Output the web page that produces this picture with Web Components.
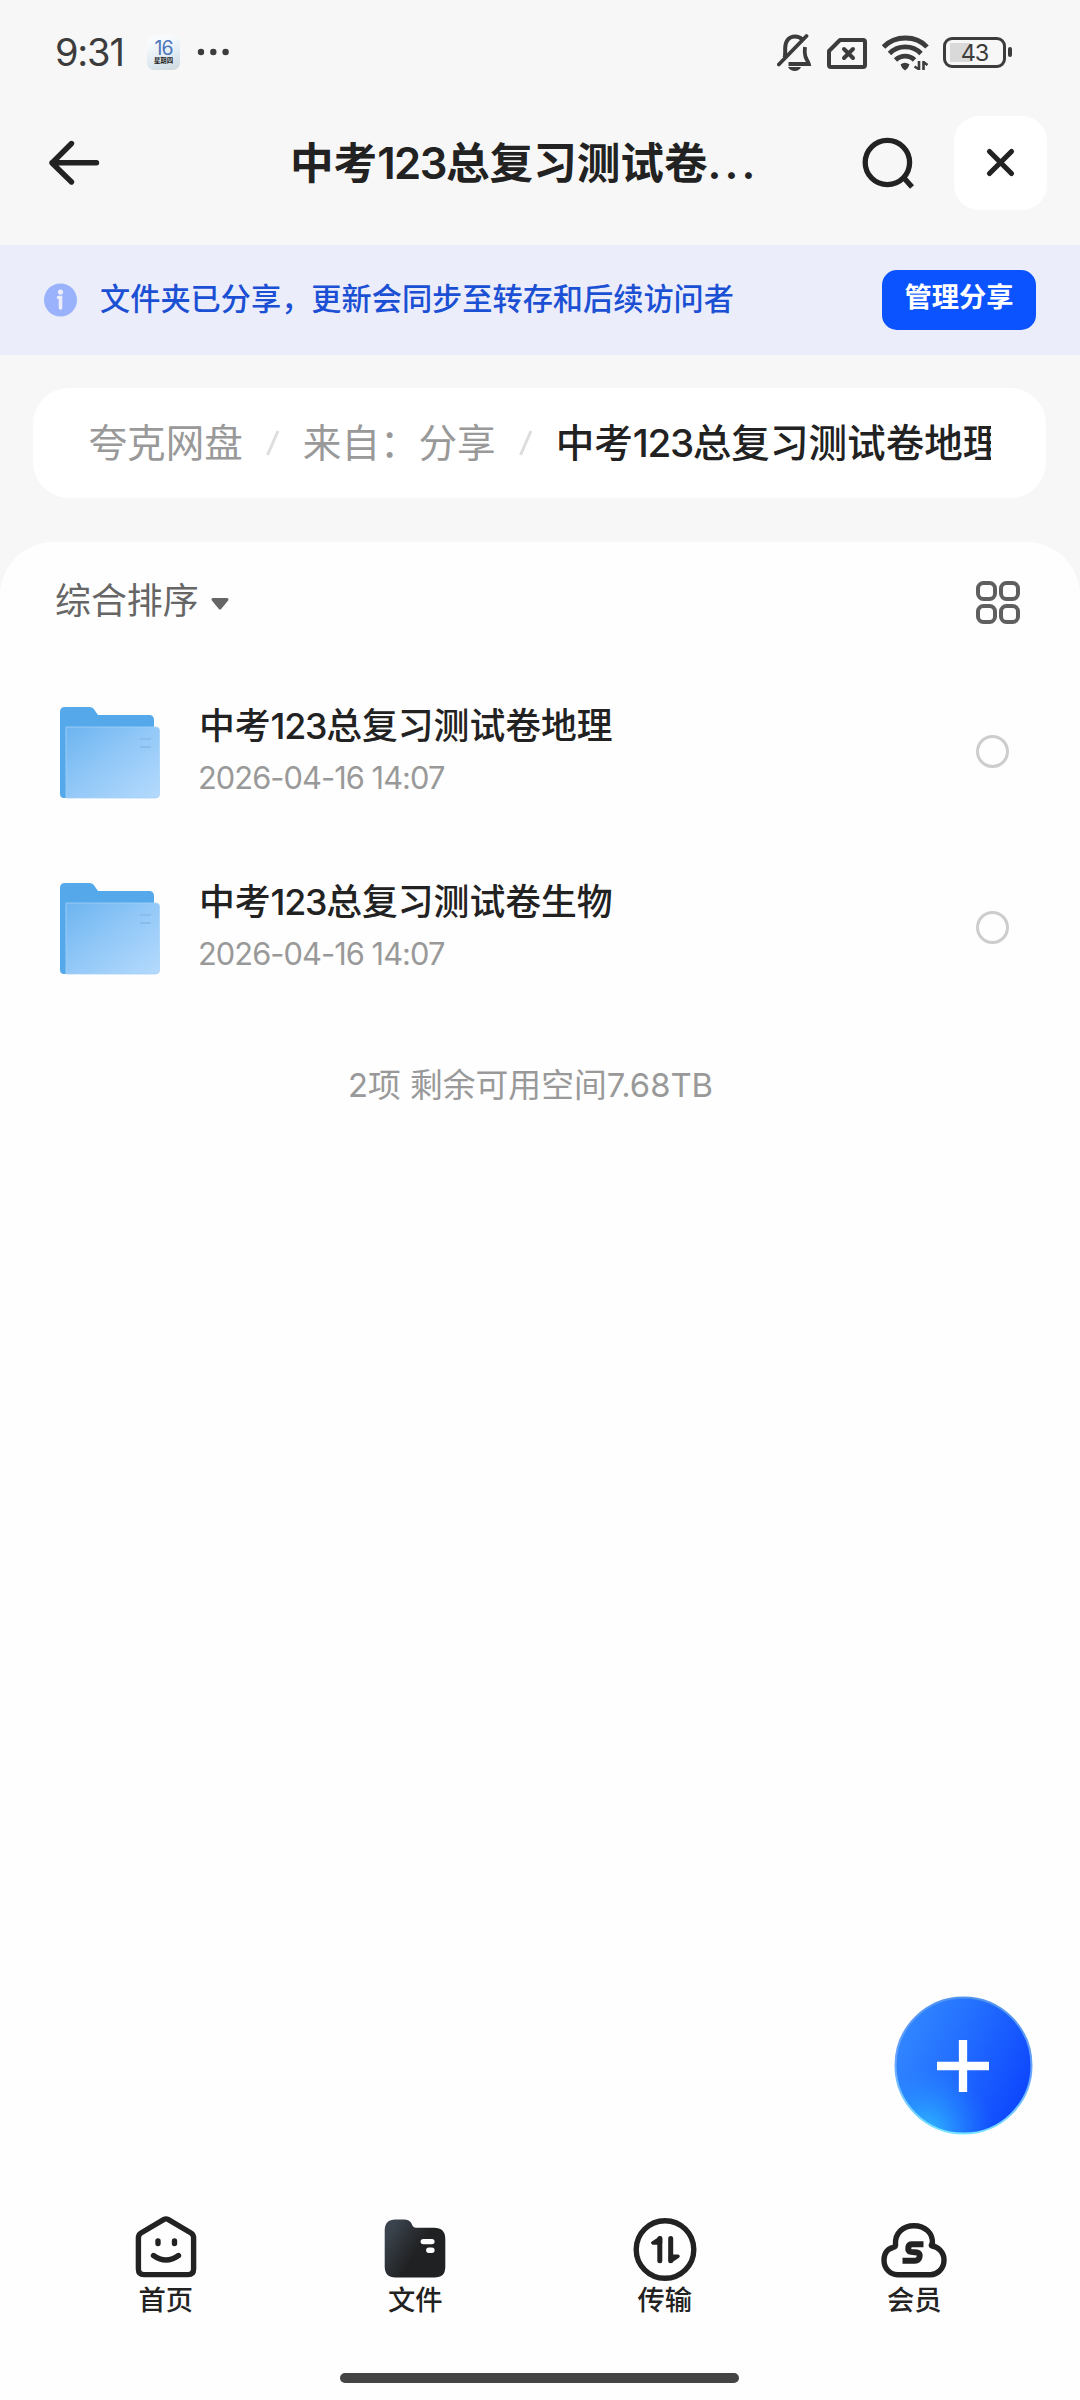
<!DOCTYPE html>
<html lang="zh-CN">
<head>
<meta charset="utf-8">
<title>网盘</title>
<style>
  body {
    margin: 0;
    background: #f7f7f7;
    color: #222;
    font-family: Inter, "Noto Sans CJK SC", sans-serif;
  }
  .num { letter-spacing: -0.035em; }
  .more { letter-spacing: 0.07em; }
</style>
</head>
<body>
<drive-page>
  <status-bar time="9:31" battery="43"></status-bar>
  <title-bar>中考<span class="num">123</span>总复习测试卷<span class="more">...</span></title-bar>
  <share-banner action="管理分享">文件夹已分享，更新会同步至转存和后续访问者</share-banner>
  <path-bar>
    <path-item>夸克网盘</path-item>
    <path-item>来自：分享</path-item>
    <path-item current>中考<span class="num">123</span>总复习测试卷地理</path-item>
  </path-bar>
  <file-sheet sort="综合排序">
    <file-row date="2026-04-16 14:07">中考<span class="num">123</span>总复习测试卷地理</file-row>
    <file-row date="2026-04-16 14:07">中考<span class="num">123</span>总复习测试卷生物</file-row>
    <span slot="summary">2项 剩余可用空间7.68TB</span>
  </file-sheet>
  <add-button slot="float"></add-button>
  <tab-bar slot="bottom">
    <tab-item icon="home">首页</tab-item>
    <tab-item icon="folder">文件</tab-item>
    <tab-item icon="transfer">传输</tab-item>
    <tab-item icon="member">会员</tab-item>
  </tab-bar>
</drive-page>

<script>
class BaseElement extends HTMLElement {
  connectedCallback() {
    if (this.shadowRoot) {
      return;
    }
    this.attachShadow({ mode: "open" }).innerHTML = this.render();
  }
}

class DrivePage extends BaseElement {
  render() {
    return `
    <style>
        :host {
            display: flex;
            flex-direction: column;
            position: relative;
            width: 1080px;
            height: 2400px;
            overflow: hidden;
        }
        .bottom {
            background: #fefefe;
        }
        .float {
            position: absolute;
            right: 47px;
            bottom: 265px;
        }
    </style>
    <slot></slot>
    <div class="bottom"><slot name="bottom"></slot></div>
    <div class="float"><slot name="float"></slot></div>`;
  }
}

class StatusBar extends BaseElement {
  render() {
    return `
    <style>
        :host {
            display: flex;
            align-items: center;
            box-sizing: border-box;
            height: 104px;
            padding: 0 68px 0 55px;
            color: #3c3c3c;
        }
        svg { display: block; }
        .time {
            width: 92px;
            font-size: 38px;
            line-height: 40px;
            letter-spacing: -1.2px;
        }
        .calendar {
            display: flex;
            flex-direction: column;
            align-items: center;
            box-sizing: border-box;
            width: 33px;
            height: 35px;
            padding-top: 5px;
            border-radius: 7px;
            background: linear-gradient(160deg, #f8fbfd 20%, #dde9f1 65%, #ccd8da);
        }
        .day {
            color: #4c76bd;
            font-size: 19.5px;
            line-height: 17px;
            letter-spacing: -1px;
        }
        .week {
            color: #222;
            font-size: 6.4px;
            line-height: 8px;
            font-weight: 700;
        }
        .dots { margin-left: 17px; }
        .icons {
            display: flex;
            align-items: center;
            margin-left: auto;
        }
        .battery {
            display: flex;
            align-items: center;
            gap: 2px;
        }
        .cell {
            box-sizing: border-box;
            width: 63px;
            height: 31px;
            border: 3px solid #3c3c3c;
            border-radius: 9px;
            font-size: 23.5px;
            line-height: 26px;
            text-align: center;
            letter-spacing: -1.2px;
            background: linear-gradient(#d9d9d9, #d9d9d9) 4px 3px / 20px 19px no-repeat;
        }
        .nub {
            width: 4px;
            height: 10px;
            border-radius: 2px;
            background: #3c3c3c;
        }
    </style>
    <div class="time">${this.getAttribute("time")}</div>
    <div class="calendar"><span class="day">16</span><span class="week">星期四</span></div>
    <svg class="dots" width="32" height="8" fill="#3c3c3c"><circle cx="4" cy="4" r="3.2"/><circle cx="16.3" cy="4" r="3.2"/><circle cx="28.6" cy="4" r="3.2"/></svg>
    <div class="icons">
        <svg width="50" height="44" viewBox="0 0 50 44" fill="none" stroke="#3c3c3c" stroke-width="4">
            <path d="M7.500 27.500C8.600 25 8.100 21.500 8.200 18C8.400 10.500 12.500 6.500 18 6.500C21 6.500 23.500 7.500 25.200 9.500"/>
            <path d="M28 17C27.600 20 27.600 23.500 28.300 26C29 29 31 31 31.800 34H11.500" stroke-width="3.800"/>
            <path d="M1.800 34.500L29.500 6" stroke-linecap="round" stroke-width="3.800"/>
            <path d="M11 37H24C22 42.400 13.500 42.400 11 37Z" fill="#3c3c3c" stroke="none"/>
        </svg>
        <svg width="55" height="44" viewBox="0 0 55 44" fill="none" stroke="#3c3c3c" stroke-width="4">
            <path d="M13 10H36Q38 10 38 12V35Q38 37 36 37H4Q2 37 2 35V21Z" stroke-linejoin="round"/>
            <path d="M17 19L26 28M26 19L17 28" stroke-linecap="round"/>
        </svg>
        <svg width="61" height="44" viewBox="0 0 61 44" fill="none" stroke="#3c3c3c" stroke-width="4.800">
            <path d="M1.500 17C13 5 34 5 45 17"/>
            <path d="M7.500 23.500C16 14.700 30.500 14.700 39 23.500"/>
            <path d="M13.500 30C19 24.800 27.500 24.800 32.500 30"/>
            <path d="M18.500 34.500Q23 31 27.500 34.500Q26.500 38.500 23 40.500Q19.500 38.500 18.500 34.500Z" fill="#3c3c3c" stroke="none"/>
            <path d="M37 31V40M36.500 39L32.500 36.500M41.500 40V31M42 32.500L45.500 35" stroke-width="2.600"/>
        </svg>
        <div class="battery"><div class="cell">${this.getAttribute("battery")}</div><div class="nub"></div></div>
    </div>`;
  }
}

class TitleBar extends BaseElement {
  render() {
    return `
    <style>
        :host {
            display: flex;
            align-items: center;
            box-sizing: border-box;
            height: 141px;
            padding: 0 33px 23px 47px;
        }
        svg { display: block; }
        .title {
            flex: 1;
            padding: 2px 0 0 187px;
            font-size: 43.6px;
            line-height: 60px;
            font-weight: 600;
            white-space: nowrap;
        }
        .search { margin-right: 36px; }
        .close {
            display: grid;
            place-items: center;
            width: 93px;
            height: 94px;
            border-radius: 25px;
            background: #fff;
        }
    </style>
    <svg width="56" height="48" viewBox="0 0 56 48" fill="none" stroke="#222" stroke-width="5.400" stroke-linecap="round" stroke-linejoin="round"><path d="M24.500 4.500L5 24L24.500 43M5 23.800H49.500"/></svg>
    <div class="title"><slot></slot></div>
    <svg class="search" width="56" height="56" viewBox="0 0 56 56" fill="none" stroke="#222" stroke-width="5.300"><circle cx="25.400" cy="27.500" r="22.200"/><path d="M42 43L50 52"/></svg>
    <div class="close"><svg width="34" height="34" viewBox="0 0 34 34" stroke="#222" stroke-width="5.200" stroke-linecap="round"><path d="M5.500 5.500L27.500 27.500M27.500 5.500L5.500 27.500"/></svg></div>`;
  }
}

class ShareBanner extends BaseElement {
  render() {
    return `
    <style>
        :host {
            display: flex;
            align-items: center;
            box-sizing: border-box;
            height: 110px;
            padding: 0 44px;
            background: #ebedfa;
        }
        .text {
            flex: 1;
            padding: 0 0 3px 22px;
            color: #1c50d4;
            font-size: 30.2px;
            line-height: 40px;
            font-weight: 500;
            white-space: nowrap;
        }
        button {
            width: 154px;
            height: 60px;
            padding: 0 0 4px;
            border: none;
            border-radius: 15px;
            background: #0b53ff;
            color: #fff;
            font: inherit;
            font-size: 27.3px;
            line-height: 40px;
            font-weight: 600;
        }
    </style>
    <svg width="34" height="34" viewBox="0 0 34 34"><circle cx="16.500" cy="17" r="16.500" fill="#9ab2fb"/><circle cx="16.500" cy="9" r="2.600" fill="#ebedfa"/><path d="M14.500 14.500H16.500V25" fill="none" stroke="#ebedfa" stroke-width="3.600" stroke-linecap="round"/></svg>
    <div class="text"><slot></slot></div>
    <button>${this.getAttribute("action")}</button>`;
  }
}

class PathBar extends BaseElement {
  render() {
    return `
    <style>
        :host {
            display: flex;
            align-items: center;
            box-sizing: border-box;
            height: 110px;
            margin: 33px 34px 44px 33px;
            padding: 0 55.5px;
            border-radius: 36px;
            background: #fff;
        }
        .clip {
            display: flex;
            width: 904px;
            overflow: hidden;
        }
    </style>
    <div class="clip"><slot></slot></div>`;
  }
}

class PathItem extends BaseElement {
  render() {
    const slash = this.hasAttribute("current") ? "" : `<svg width="60" height="26" viewBox="0 0 60 26"><path d="M24.500 25L35 1" stroke="#ddd" stroke-width="3"/></svg>`;
    return `
    <style>
        :host {
            display: flex;
            flex: none;
            align-items: center;
            color: #999;
            font-size: 38.6px;
            line-height: 56px;
            white-space: nowrap;
        }
        :host([current]) {
            color: #222;
            font-weight: 500;
        }
    </style>
    <span><slot></slot></span>${slash}`;
  }
}

class FileSheet extends BaseElement {
  render() {
    return `
    <style>
        :host {
            display: flex;
            flex: 1;
            flex-direction: column;
            border-radius: 54px 54px 0 0;
            background: #fefefe;
        }
        .tools {
            display: flex;
            align-items: center;
            height: 121px;
            padding: 0 60px 0 55px;
            color: #666;
            font-size: 35.9px;
            line-height: 50px;
        }
        .sort { padding-bottom: 3px; }
        .arrow { margin: 2px 0 0 11px; }
        .grid {
            display: grid;
            grid-template-columns: 20.6px 20.6px;
            grid-auto-rows: 20.6px;
            gap: 2.6px;
            margin-left: auto;
        }
        .grid i {
            border: 4.6px solid #5f5f5f;
            border-radius: 7.5px;
        }
        .summary {
            margin-top: 47px;
            padding-right: 19px;
            color: #999;
            font-size: 32.8px;
            line-height: 46px;
            text-align: center;
        }
    </style>
    <div class="tools">
        <span class="sort">${this.getAttribute("sort")}</span>
        <svg class="arrow" width="20" height="14" viewBox="0 0 20 14"><path d="M3 2.500H17L10 11Z" fill="#666" stroke="#666" stroke-width="3" stroke-linejoin="round"/></svg>
        <div class="grid"><i></i><i></i><i></i><i></i></div>
    </div>
    <slot></slot>
    <div class="summary"><slot name="summary"></slot></div>`;
  }
}

class FileRow extends BaseElement {
  render() {
    return `
    <style>
        :host {
            display: flex;
            align-items: center;
            height: 176px;
            padding: 0 71.5px 0 60px;
        }
        .folder { margin-top: 3px; }
        .text {
            flex: 1;
            padding-left: 39px;
        }
        .name {
            padding-top: 1px;
            font-size: 35.8px;
            line-height: 52px;
            font-weight: 500;
        }
        .date {
            margin-left: -1px;
            color: #999;
            font-size: 30.8px;
            line-height: 52px;
            letter-spacing: -0.95px;
        }
        .check {
            width: 27px;
            height: 27px;
            border: 3px solid #cdcdcd;
            border-radius: 50%;
        }
    </style>
    <svg class="folder" width="100" height="92" viewBox="0 0 100 92">
        <defs>
            <linearGradient id="front" x1="0" y1="0" x2="1" y2="1"><stop offset="0" stop-color="#6cb4f0"/><stop offset=".45" stop-color="#90c7f7"/><stop offset="1" stop-color="#b5dafd"/></linearGradient>
        </defs>
        <path d="M0 5Q0 0 5 0H29Q33 0 34.500 3L38 8H89Q94 8 94 13V40H10V91H4Q0 91 0 87Z" fill="#55a9ea"/>
        <path d="M6 20H96Q99.500 20 99.500 23.500V87Q99.500 91 95.500 91H6Z" fill="url(#front)" stroke="#a5d2f7" stroke-width=".8"/>
        <path d="M80 32H91M80 40H91" stroke="#8bbdec" stroke-width="2"/>
    </svg>
    <div class="text">
        <div class="name"><slot></slot></div>
        <div class="date">${this.getAttribute("date")}</div>
    </div>
    <div class="check"></div>`;
  }
}

class AddButton extends BaseElement {
  render() {
    return `
    <style>
        :host { display: block; }
        svg { display: block; }
    </style>
    <svg width="139" height="139" viewBox="0 0 139 139">
        <defs>
            <linearGradient id="base" x1="0" y1=".25" x2="1" y2=".7"><stop offset="0" stop-color="#3389ff"/><stop offset=".45" stop-color="#226dff"/><stop offset="1" stop-color="#0c44fd"/></linearGradient>
            <radialGradient id="glow" cx=".22" cy="1" r=".5"><stop offset="0" stop-color="#30bfff"/><stop offset="1" stop-color="#2389ff" stop-opacity="0"/></radialGradient>
            <linearGradient id="rim" x1=".5" y1="0" x2=".4" y2="1"><stop offset="0" stop-color="#5295ee"/><stop offset=".5" stop-color="#6aa4ff"/><stop offset="1" stop-color="#7be6ff"/></linearGradient>
        </defs>
        <circle cx="69.500" cy="69.500" r="68.500" fill="url(#base)"/>
        <circle cx="69.500" cy="69.500" r="68.500" fill="url(#glow)"/>
        <circle cx="69.500" cy="69.500" r="68" fill="none" stroke="url(#rim)" stroke-width="2"/>
        <path d="M69 44V96M43 70H95" stroke="#fff" stroke-width="8.300" stroke-linecap="butt"/>
    </svg>`;
  }
}

class TabBar extends BaseElement {
  render() {
    return `
    <style>
        :host {
            display: flex;
            flex-direction: column;
            align-items: center;
            height: 188px;
        }
        .tabs {
            display: flex;
            width: 998px;
            height: 161px;
        }
        .handle {
            width: 399px;
            height: 10px;
            margin-right: 1px;
            border-radius: 5px;
            background: #444;
        }
    </style>
    <div class="tabs"><slot></slot></div>
    <div class="handle"></div>`;
  }
}

const tabIcons = {
  home: `<g fill="none" stroke="#222" stroke-width="5.400" stroke-linecap="round" stroke-linejoin="round">
    <path d="M33 7.400Q35 6.300 37 7.400L60 21Q62.600 22.500 62.600 26V57Q62.600 62.600 57 62.600H13Q7.400 62.600 7.400 57V26Q7.400 22.500 10 21Z"/>
    <path d="M22.500 43.500Q35 52.500 47.500 43.500"/><path d="M27 29V31.500M43.500 29V31.500"/></g>`,
  folder: `<defs><linearGradient id="dark" x1="0" y1=".3" x2=".5" y2=".6"><stop offset="0" stop-color="#3b444e"/><stop offset="1" stop-color="#202122"/></linearGradient></defs>
    <path d="M4.700 18.500Q4.700 7.500 15.500 7.500H24Q30 7.500 32 12.500Q33.300 15.800 36 15.800H54Q65.300 15.800 65.300 27V55Q65.300 65.500 54.500 65.500H15.500Q4.700 65.500 4.700 54.500Z" fill="url(#dark)"/>
    <path d="M43.300 29.600H51.900M48.800 38.200H51.900" stroke="#fff" stroke-width="5.400" stroke-linecap="round"/>`,
  transfer: `<circle cx="35" cy="37.500" r="28.800" fill="none" stroke="#222" stroke-width="5.400"/>
    <g fill="#222" stroke="#222" stroke-linejoin="round" stroke-linecap="round"><path d="M29.800 26.500V48.800M40.700 26.500V48.800" stroke-width="5"/><path d="M30.500 26L22.800 30.900H30.500ZM40.500 49.200L48 44.200H40.500Z" stroke-width="3.500"/></g>`,
  member: `<g fill="none" stroke="#222" stroke-width="5.400"><path d="M18.500 62.700H51.500C58 62.700 65 57 65 48C65 40 58.500 34.500 53 34Q51.500 33.500 53.500 31.500C54 21 46 13.700 35 13.700C24 13.700 16 21 16.500 32Q17.500 34.500 14 35.500C9 36.500 5 41 5 48C5 57 11.500 62.700 18.500 62.700Z"/>
    <path d="M44.500 32.300H33Q30 32.300 29.400 35Q28.700 39.300 32 39.900L38 40.500Q41.500 41 40.500 45Q39.800 48.700 36 48.700H23.500" stroke-width="6"/></g>`,
};

class TabItem extends BaseElement {
  render() {
    return `
    <style>
        :host {
            display: flex;
            flex: 1;
            flex-direction: column;
            align-items: center;
            font-size: 27.3px;
            line-height: 36px;
            font-weight: 500;
        }
        svg {
            display: block;
            margin-bottom: 1px;
        }
    </style>
    <svg width="70" height="70" viewBox="0 0 70 70">${tabIcons[this.getAttribute("icon")]}</svg>
    <span><slot></slot></span>`;
  }
}

customElements.define("drive-page", DrivePage);
customElements.define("status-bar", StatusBar);
customElements.define("title-bar", TitleBar);
customElements.define("share-banner", ShareBanner);
customElements.define("path-bar", PathBar);
customElements.define("path-item", PathItem);
customElements.define("file-sheet", FileSheet);
customElements.define("file-row", FileRow);
customElements.define("add-button", AddButton);
customElements.define("tab-bar", TabBar);
customElements.define("tab-item", TabItem);
</script>
</body>
</html>
